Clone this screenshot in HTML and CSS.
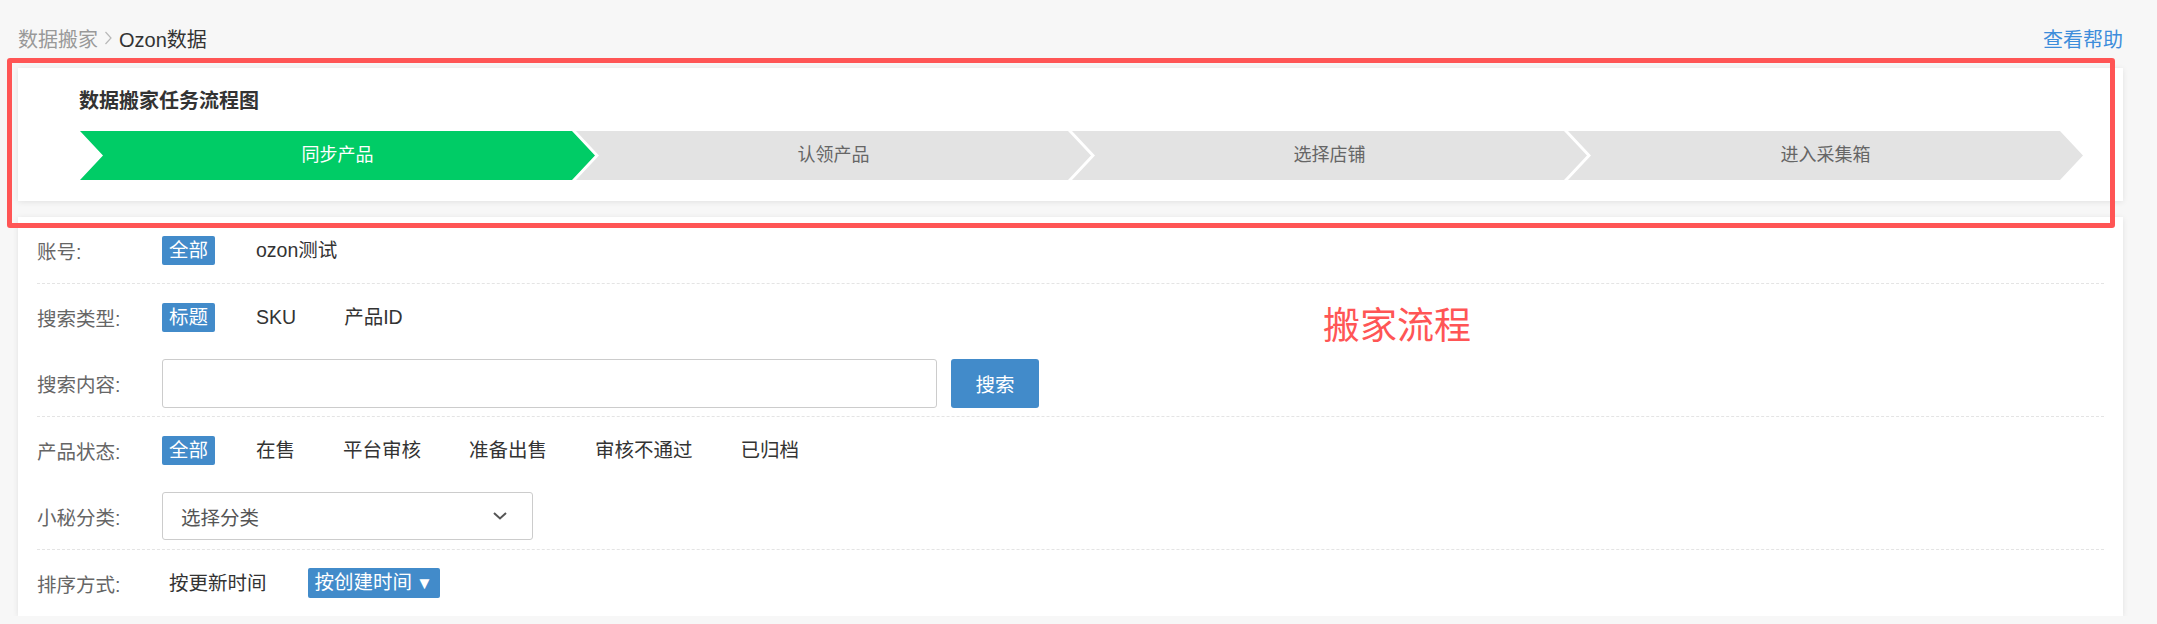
FILE: index.html
```html
<!DOCTYPE html>
<html lang="zh-CN">
<head>
    <meta charset="UTF-8">
    <link rel="stylesheet" href="styles.css">
    <title>Ozon数据</title>
</head>
<body>
<div id="page">
    <div class="topbar">
        <div class="crumbs">
            <span class="crumb-link">数据搬家</span>
            <svg class="crumb-sep" width="9" height="14" viewBox="0 0 9 14"><path d="M1.5 1 L7 7 L1.5 13" fill="none" stroke="#b8b8b8" stroke-width="1.2"/></svg>
            <span class="crumb-current">Ozon数据</span>
        </div>
        <a class="help" href="#">查看帮助</a>
    </div>

    <div class="card flow">
        <h3 class="flow-title">数据搬家任务流程图</h3>
        <div class="steps">
            <div class="step done">同步产品</div>
            <div class="step">认领产品</div>
            <div class="step">选择店铺</div>
            <div class="step">进入采集箱</div>
        </div>
    </div>

    <div class="card filters">
        <div class="group">
            <div class="row">
                <span class="label">账号:</span>
                <span class="opt active">全部</span>
                <span class="opt">ozon测试</span>
            </div>
        </div>
        <div class="group">
            <div class="row">
                <span class="label">搜索类型:</span>
                <span class="opt active">标题</span>
                <span class="opt">SKU</span>
                <span class="opt">产品ID</span>
            </div>
            <div class="row">
                <span class="label">搜索内容:</span>
                <input class="search-input" type="text">
                <button class="search-btn">搜索</button>
            </div>
        </div>
        <div class="group">
            <div class="row">
                <span class="label">产品状态:</span>
                <span class="opt active">全部</span>
                <span class="opt">在售</span>
                <span class="opt">平台审核</span>
                <span class="opt">准备出售</span>
                <span class="opt">审核不通过</span>
                <span class="opt">已归档</span>
            </div>
            <div class="row">
                <span class="label">小秘分类:</span>
                <div class="select">
                    <span>选择分类</span>
                    <svg width="14" height="8" viewBox="0 0 14 8"><path d="M1 1 L7 6.5 L13 1" fill="none" stroke="#555" stroke-width="2"/></svg>
                </div>
            </div>
        </div>
        <div class="group last">
            <div class="row">
                <span class="label">排序方式:</span>
                <span class="opt">按更新时间</span>
                <span class="opt active">按创建时间<span class="caret">▼</span></span>
            </div>
        </div>
    </div>

    <!-- 标注 -->
    <div class="mark-box"></div>
    <div class="mark-note">搬家流程</div>
</div>
</body>
</html>
```

FILE: styles.css
```css
body {
    margin: 0;
    background: #f7f7f7;
    font-family: "Liberation Sans", "Noto Sans CJK SC", sans-serif;
    font-size: 19.5px;
    color: #333;
}
#page {
    position: relative;
    padding: 0 34px 0 18px;
}
.topbar {
    display: flex;
    justify-content: space-between;
    align-items: center;
    height: 44px;
    padding-top: 16px;
    margin-bottom: 8px;
    font-size: 20px;
}
.crumbs {
    display: flex;
    align-items: center;
}
.crumb-link {
    color: #999;
}
.crumb-sep {
    margin: 0 6px 0 6px;
}
.crumb-current {
    color: #333;
}
.help {
    color: #3d8ddb;
    text-decoration: none;
}
.card {
    background: #fff;
    box-shadow: 0 1px 6px rgba(0,0,0,0.09);
}
.flow {
    height: 133px;
    box-sizing: border-box;
    padding: 19px 40px 0 61px;
    margin-bottom: 16px;
}
.flow-title {
    margin: 0 0 16px 0;
    font-size: 20px;
    line-height: 28px;
    font-weight: bold;
    color: #333;
}
.steps {
    display: flex;
    margin-left: 1px;
}
.step {
    flex: 1;
    height: 49px;
    line-height: 49px;
    text-align: center;
    font-size: 18px;
    color: #666;
    background: #e3e3e3;
    clip-path: polygon(0 0, calc(100% - 23px) 0, 100% 50%, calc(100% - 23px) 100%, 0 100%, 23px 50%);
}
.step + .step {
    margin-left: -19px;
}
.step.done {
    background: #00cc66;
    color: #fff;
}
.filters {
    padding: 0 19px;
}
.group {
    border-bottom: 1px dashed #e4e4e4;
}
.group.last {
    border-bottom: none;
}
.row {
    display: flex;
    align-items: center;
    height: 66px;
}
.label {
    width: 125px;
    flex-shrink: 0;
    color: #666;
}
.opt {
    padding: 0 7px;
    margin-right: 34px;
    line-height: 29px;
    border-radius: 2px;
    color: #333;
}
.opt.active {
    background: #428bca;
    color: #fff;
}
.caret {
    margin-left: 4px;
    font-size: 17px;
}
.search-input {
    width: 775px;
    height: 49px;
    box-sizing: border-box;
    border: 1px solid #ccc;
    border-radius: 3px;
    outline: none;
}
.search-btn {
    width: 88px;
    height: 49px;
    margin-left: 14px;
    border: none;
    border-radius: 3px;
    background: #428bca;
    color: #fff;
    font-family: inherit;
    font-size: 19.5px;
}
.select {
    display: flex;
    justify-content: space-between;
    align-items: center;
    width: 371px;
    height: 48px;
    box-sizing: border-box;
    padding: 0 25px 0 18px;
    border: 1px solid #ccc;
    border-radius: 3px;
    color: #555;
}
.mark-box {
    position: absolute;
    left: 7px;
    top: 58px;
    width: 2108px;
    height: 170px;
    box-sizing: border-box;
    border: 5px solid #ff5555;
    border-radius: 3px;
}
.mark-note {
    position: absolute;
    left: 1323px;
    top: 296px;
    font-size: 37px;
    color: #ff5555;
}
```
